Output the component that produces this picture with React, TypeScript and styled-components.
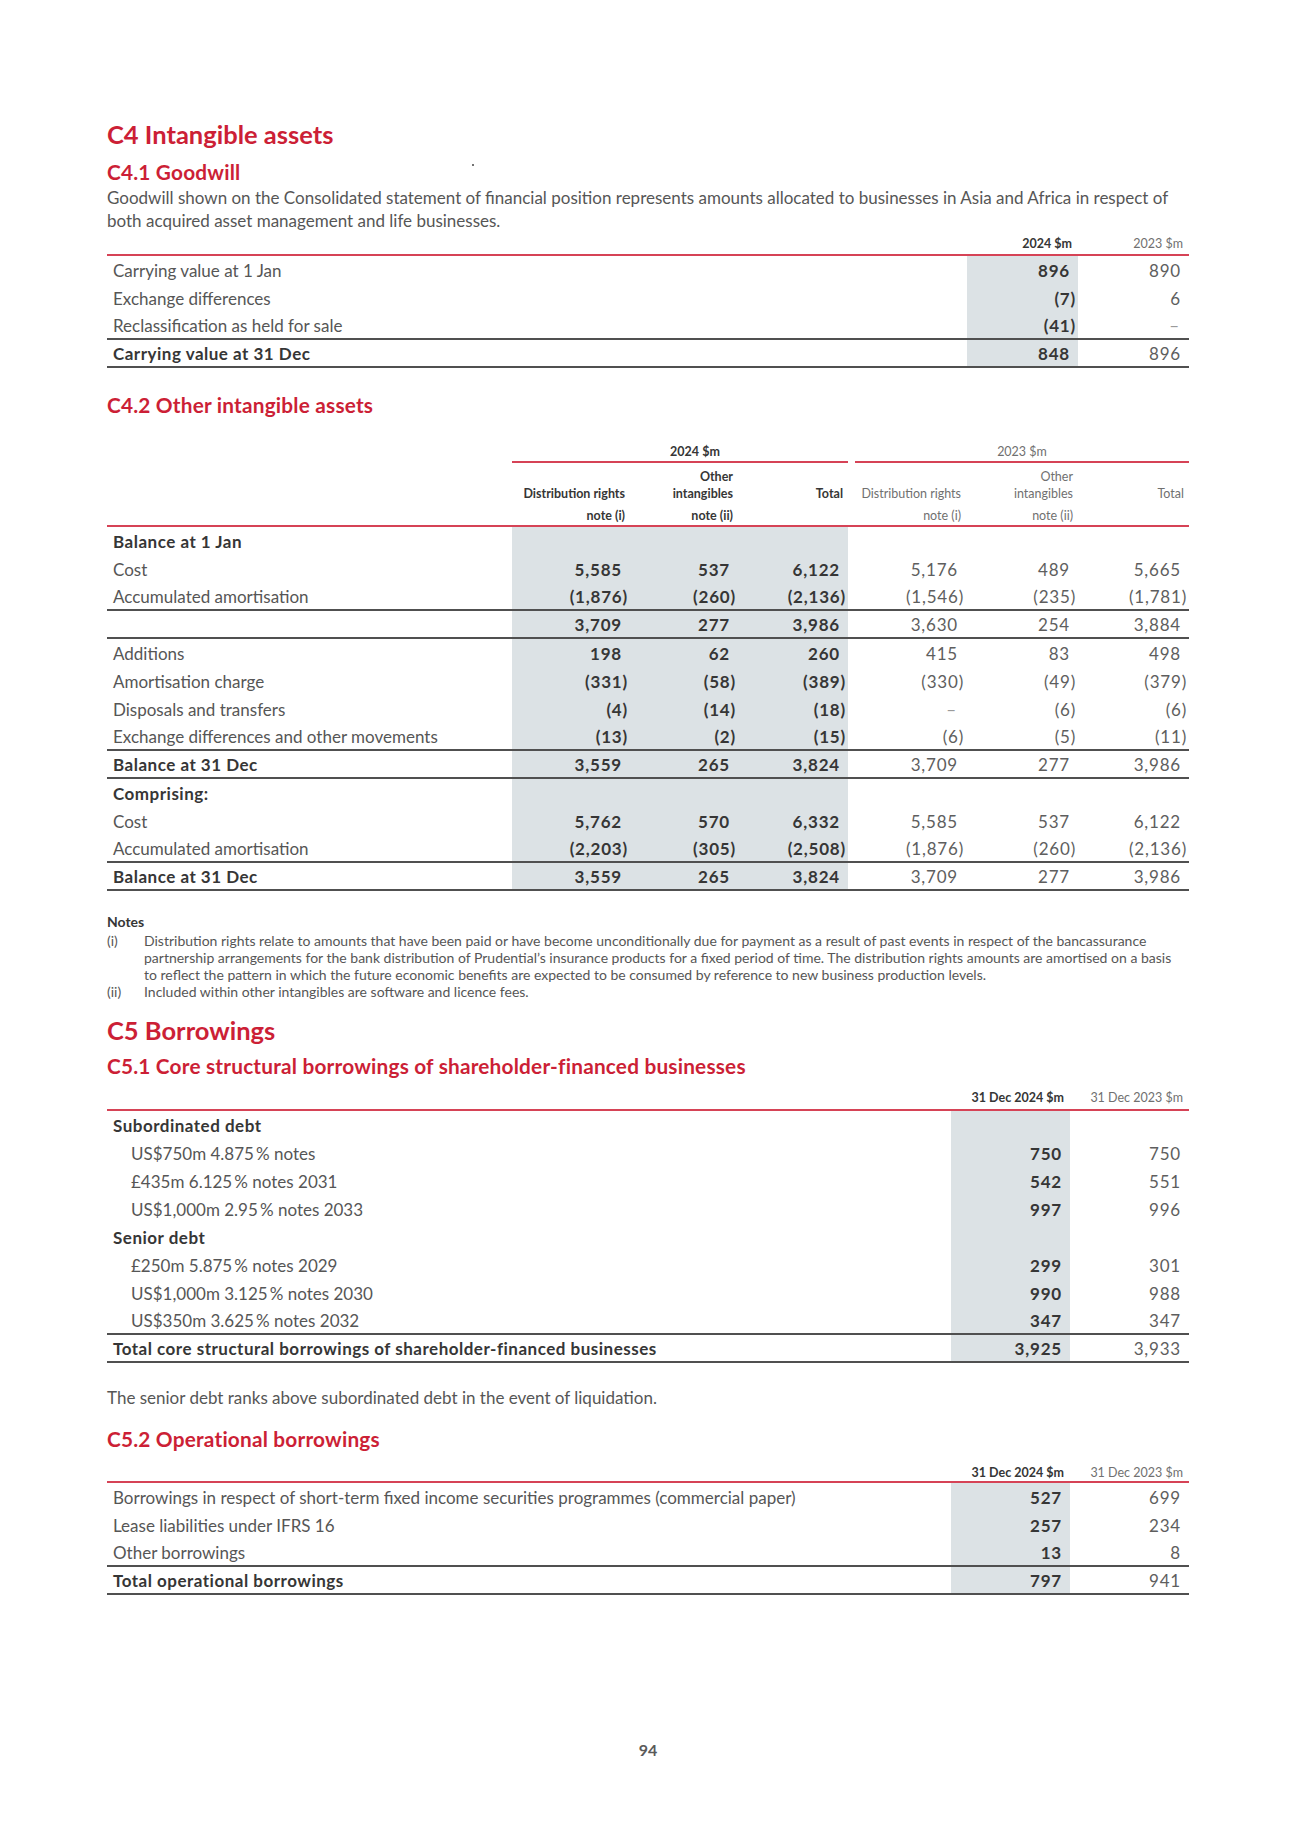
import React from 'react';
import styled, { createGlobalStyle } from 'styled-components';

const RED = '#cc1f36';
const RULE_RED = '#d64356';
const RULE_DARK = '#505050';
const SHADE = '#dce2e5';
const INK = '#363636';
const TEXT = '#565656';
const LIGHT = '#5e5e5e';

const GlobalStyle = createGlobalStyle`
  html, body { margin: 0; padding: 0; background: #ffffff; }
  body { font-family: Lato, "Open Sans", "Liberation Sans", sans-serif; color: ${TEXT}; }
`;

const Page = styled.div`
  position: relative;
  width: 1300px;
  min-height: 1839px;
  box-sizing: border-box;
  padding: 119px 111px 0 107px;
  display: flex;
  flex-direction: column;
`;

const Speck = styled.span`
  position: absolute;
  left: 472px;
  top: 164px;
  width: 2px;
  height: 2px;
  border-radius: 1px;
  background: #444;
`;

const H1 = styled.h1<{ $mt?: number }>`
  margin: ${(p) => p.$mt ?? 0}px 0 0;
  font-size: 25.5px;
  line-height: 30px;
  font-weight: 700;
  color: ${RED};
`;

const H2 = styled.h2<{ $mt: number }>`
  margin: ${(p) => p.$mt}px 0 0;
  font-size: 20.8px;
  line-height: 24px;
  letter-spacing: 0.2px;
  font-weight: 700;
  color: ${RED};
`;

const Para = styled.p<{ $mt: number; $lh?: number }>`
  margin: ${(p) => p.$mt}px 0 0;
  font-size: 17px;
  line-height: ${(p) => p.$lh ?? 23}px;
  color: ${TEXT};
  white-space: nowrap;
`;

const Table = styled.div<{ $mt: number }>`
  margin-top: ${(p) => p.$mt}px;
  display: flex;
  flex-direction: column;
`;

const Row = styled.div<{ $cols: string; $rule?: 'red' | 'dark' }>`
  display: grid;
  grid-template-columns: ${(p) => p.$cols};
  height: 28px;
  box-sizing: border-box;
  border-bottom: ${(p) =>
    p.$rule ? `2px solid ${p.$rule === 'red' ? RULE_RED : RULE_DARK}` : 'none'};
`;

const HeadRow = styled.div<{ $cols: string; $pb: number; $pt?: number }>`
  display: grid;
  grid-template-columns: ${(p) => p.$cols};
  align-items: end;
  padding-top: ${(p) => p.$pt ?? 0}px;
  padding-bottom: ${(p) => p.$pb}px;
  border-bottom: 2px solid ${RULE_RED};
`;

const GroupRow = styled.div<{ $cols: string }>`
  display: grid;
  grid-template-columns: ${(p) => p.$cols};
`;

const GroupCell = styled.div<{ $span: string; $cur?: boolean; $ml?: number; $pl?: number }>`
  grid-column: ${(p) => p.$span};
  margin-left: ${(p) => p.$ml ?? 0}px;
  padding-left: ${(p) => p.$pl ?? 0}px;
  padding-bottom: 1px;
  border-bottom: 2px solid ${RULE_RED};
  text-align: center;
  font-size: 12.5px;
  line-height: 16px;
  font-weight: ${(p) => (p.$cur ? 700 : 400)};
  color: ${(p) => (p.$cur ? INK : '#707070')};
`;

const HeadCell = styled.div<{ $cur?: boolean; $pr?: number }>`
  text-align: right;
  padding-right: ${(p) => p.$pr ?? 6}px;
  font-size: 12.5px;
  line-height: 16px;
  font-weight: ${(p) => (p.$cur ? 700 : 400)};
  color: ${(p) => (p.$cur ? INK : '#707070')};
  white-space: nowrap;
`;

const HeadTitle = styled.div`
  line-height: 17px;
`;

const HeadNote = styled.div`
  margin-top: 5px;
  height: 17px;
  line-height: 17px;
`;

const Label = styled.div<{ $bold?: boolean; $indent?: boolean }>`
  display: flex;
  align-items: center;
  padding-left: ${(p) => (p.$indent ? 24 : 6)}px;
  font-size: 17px;
  letter-spacing: ${(p) => (p.$bold ? 0.5 : 0)}px;
  font-weight: ${(p) => (p.$bold ? 700 : 400)};
  color: ${(p) => (p.$bold ? INK : TEXT)};
  white-space: nowrap;
`;

const Num = styled.div<{ $shade?: boolean; $cur?: boolean; $neg?: boolean; $dash?: boolean }>`
  display: flex;
  align-items: center;
  justify-content: flex-end;
  padding-right: ${(p) => (p.$neg ? 2 : p.$dash ? 9 : 8)}px;
  background: ${(p) => (p.$shade ? SHADE : 'transparent')};
  font-size: 17px;
  letter-spacing: 0.8px;
  font-weight: ${(p) => (p.$cur ? 700 : 400)};
  color: ${(p) => (p.$dash ? '#9a9a9a' : p.$cur ? INK : LIGHT)};
`;

const NotesBlock = styled.div`
  margin-top: 23px;
  display: flex;
  flex-direction: column;
`;

const NotesTitle = styled.div`
  font-size: 14px;
  line-height: 16px;
  font-weight: 700;
  color: ${INK};
  margin-bottom: 2px;
`;

const NoteItem = styled.div`
  display: grid;
  grid-template-columns: 37px 1fr;
  font-size: 14px;
  line-height: 17px;
  color: ${TEXT};
  white-space: nowrap;
`;

const PageNumber = styled.div`
  margin-top: 146px;
  text-align: center;
  font-size: 16px;
  line-height: 18px;
  font-weight: 700;
  color: #5a5a5a;
`;

type Line = {
  label: string;
  bold?: boolean;
  indent?: boolean;
  values?: string[];
  rule?: 'dark';
};

const renderNum = (v: string, i: number, shadeCount: number, key: string) => {
  const cur = i < shadeCount;
  return (
    <Num
      key={key}
      $shade={cur}
      $cur={cur}
      $neg={v.startsWith('(')}
      $dash={v === '–'}
    >
      {v}
    </Num>
  );
};

const DataRows: React.FC<{ cols: string; lines: Line[]; shadeCount: number; colCount: number }> = ({
  cols,
  lines,
  shadeCount,
  colCount,
}) => (
  <>
    {lines.map((l, r) => (
      <Row key={r} $cols={cols} $rule={l.rule}>
        <Label $bold={l.bold} $indent={l.indent}>
          {l.label}
        </Label>
        {Array.from({ length: colCount }).map((_, i) =>
          renderNum(l.values ? l.values[i] : '', i, shadeCount, `${r}-${i}`)
        )}
      </Row>
    ))}
  </>
);

const GW_COLS = '860px 111px 111px';
const goodwill: Line[] = [
  { label: 'Carrying value at 1 Jan', values: ['896', '890'] },
  { label: 'Exchange differences', values: ['(7)', '6'] },
  { label: 'Reclassification as held for sale', values: ['(41)', '–'], rule: 'dark' },
  { label: 'Carrying value at 31 Dec', bold: true, values: ['848', '896'], rule: 'dark' },
];

const OI_COLS = '405px 118px 108px 110px 118px 112px 111px';
const other: Line[] = [
  { label: 'Balance at 1 Jan', bold: true },
  { label: 'Cost', values: ['5,585', '537', '6,122', '5,176', '489', '5,665'] },
  {
    label: 'Accumulated amortisation',
    values: ['(1,876)', '(260)', '(2,136)', '(1,546)', '(235)', '(1,781)'],
    rule: 'dark',
  },
  { label: '', values: ['3,709', '277', '3,986', '3,630', '254', '3,884'], rule: 'dark' },
  { label: 'Additions', values: ['198', '62', '260', '415', '83', '498'] },
  { label: 'Amortisation charge', values: ['(331)', '(58)', '(389)', '(330)', '(49)', '(379)'] },
  { label: 'Disposals and transfers', values: ['(4)', '(14)', '(18)', '–', '(6)', '(6)'] },
  {
    label: 'Exchange differences and other movements',
    values: ['(13)', '(2)', '(15)', '(6)', '(5)', '(11)'],
    rule: 'dark',
  },
  {
    label: 'Balance at 31 Dec',
    bold: true,
    values: ['3,559', '265', '3,824', '3,709', '277', '3,986'],
    rule: 'dark',
  },
  { label: 'Comprising:', bold: true },
  { label: 'Cost', values: ['5,762', '570', '6,332', '5,585', '537', '6,122'] },
  {
    label: 'Accumulated amortisation',
    values: ['(2,203)', '(305)', '(2,508)', '(1,876)', '(260)', '(2,136)'],
    rule: 'dark',
  },
  {
    label: 'Balance at 31 Dec',
    bold: true,
    values: ['3,559', '265', '3,824', '3,709', '277', '3,986'],
    rule: 'dark',
  },
];

const B_COLS = '844px 119px 119px';
const core: Line[] = [
  { label: 'Subordinated debt', bold: true },
  { label: 'US$750m 4.875\u2009% notes', indent: true, values: ['750', '750'] },
  { label: '£435m 6.125\u2009% notes 2031', indent: true, values: ['542', '551'] },
  { label: 'US$1,000m 2.95\u2009% notes 2033', indent: true, values: ['997', '996'] },
  { label: 'Senior debt', bold: true },
  { label: '£250m 5.875\u2009% notes 2029', indent: true, values: ['299', '301'] },
  { label: 'US$1,000m 3.125\u2009% notes 2030', indent: true, values: ['990', '988'] },
  { label: 'US$350m 3.625\u2009% notes 2032', indent: true, values: ['347', '347'], rule: 'dark' },
  {
    label: 'Total core structural borrowings of shareholder-financed businesses',
    bold: true,
    values: ['3,925', '3,933'],
    rule: 'dark',
  },
];

const operational: Line[] = [
  {
    label: 'Borrowings in respect of short-term fixed income securities programmes (commercial paper)',
    values: ['527', '699'],
  },
  { label: 'Lease liabilities under IFRS 16', values: ['257', '234'] },
  { label: 'Other borrowings', values: ['13', '8'], rule: 'dark' },
  { label: 'Total operational borrowings', bold: true, values: ['797', '941'], rule: 'dark' },
];

const otherHeads = [
  { t: ['Distribution rights'], n: 'note (i)', cur: true },
  { t: ['Other', 'intangibles'], n: 'note (ii)', cur: true },
  { t: ['Total'], n: '', cur: true },
  { t: ['Distribution rights'], n: 'note (i)', cur: false },
  { t: ['Other', 'intangibles'], n: 'note (ii)', cur: false },
  { t: ['Total'], n: '', cur: false },
];

export default function App() {
  return (
    <>
      <GlobalStyle />
      <Page>
        <Speck />
        <H1>C4 Intangible assets</H1>
        <H2 $mt={11}>C4.1 Goodwill</H2>
        <Para $mt={2}>
          Goodwill shown on the Consolidated statement of financial position represents amounts
          allocated to businesses in Asia and Africa in respect of
          <br />
          both acquired asset management and life businesses.
        </Para>

        <Table $mt={4}>
          <HeadRow $cols={GW_COLS} $pb={2}>
            <div />
            <HeadCell $cur>2024 $m</HeadCell>
            <HeadCell>2023 $m</HeadCell>
          </HeadRow>
          <DataRows cols={GW_COLS} lines={goodwill} shadeCount={1} colCount={2} />
        </Table>

        <H2 $mt={25}>C4.2 Other intangible assets</H2>
        <Table $mt={27}>
          <GroupRow $cols={OI_COLS}>
            <div />
            <GroupCell $span="2 / 5" $cur $pl={30}>
              2024 $m
            </GroupCell>
            <GroupCell $span="5 / 8" $ml={7}>
              2023 $m
            </GroupCell>
          </GroupRow>
          <HeadRow $cols={OI_COLS} $pb={1} $pt={5}>
            <div />
            {otherHeads.map((h, i) => (
              <HeadCell key={i} $cur={h.cur} $pr={5}>
                {h.t.map((t) => (
                  <HeadTitle key={t}>{t}</HeadTitle>
                ))}
                <HeadNote>{h.n}</HeadNote>
              </HeadCell>
            ))}
          </HeadRow>
          <DataRows cols={OI_COLS} lines={other} shadeCount={3} colCount={6} />
        </Table>

        <NotesBlock>
          <NotesTitle>Notes</NotesTitle>
          <NoteItem>
            <span>(i)</span>
            <span>
              Distribution rights relate to amounts that have been paid or have become unconditionally
              due for payment as a result of past events in respect of the bancassurance
              <br />
              partnership arrangements for the bank distribution of Prudential’s insurance products for
              a fixed period of time. The distribution rights amounts are amortised on a basis
              <br />
              to reflect the pattern in which the future economic benefits are expected to be consumed
              by reference to new business production levels.
            </span>
          </NoteItem>
          <NoteItem>
            <span>(ii)</span>
            <span>Included within other intangibles are software and licence fees.</span>
          </NoteItem>
        </NotesBlock>

        <H1 $mt={15}>C5 Borrowings</H1>
        <H2 $mt={9}>C5.1 Core structural borrowings of shareholder-financed businesses</H2>
        <Table $mt={12}>
          <HeadRow $cols={B_COLS} $pb={3}>
            <div />
            <HeadCell $cur>31 Dec 2024 $m</HeadCell>
            <HeadCell>31 Dec 2023 $m</HeadCell>
          </HeadRow>
          <DataRows cols={B_COLS} lines={core} shadeCount={1} colCount={2} />
        </Table>

        <Para $mt={24} $lh={22}>
          The senior debt ranks above subordinated debt in the event of liquidation.
        </Para>

        <H2 $mt={18}>C5.2 Operational borrowings</H2>
        <Table $mt={14}>
          <HeadRow $cols={B_COLS} $pb={0}>
            <div />
            <HeadCell $cur>31 Dec 2024 $m</HeadCell>
            <HeadCell>31 Dec 2023 $m</HeadCell>
          </HeadRow>
          <DataRows cols={B_COLS} lines={operational} shadeCount={1} colCount={2} />
        </Table>

        <PageNumber>94</PageNumber>
      </Page>
    </>
  );
}
